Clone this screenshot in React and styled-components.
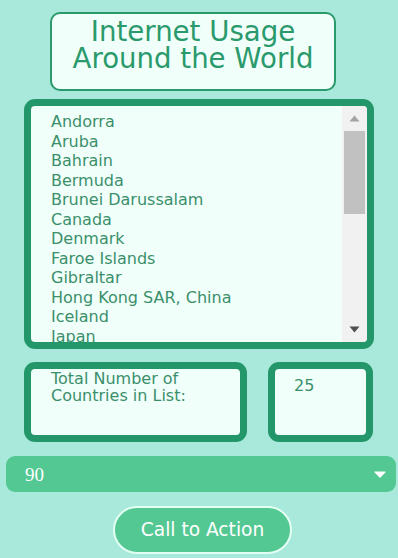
import React, { useLayoutEffect, useRef, useState } from "react";
import styled, { createGlobalStyle } from "styled-components";

const GlobalStyle = createGlobalStyle`
  html, body {
    margin: 0;
    padding: 0;
    background: #a8e9dc;
  }
  body {
    font-family: "DejaVu Sans", Verdana, sans-serif;
  }
`;

const Page = styled.main`
  display: flex;
  flex-direction: column;
  padding: 12px 0 0 0;
  width: 398px;
  box-sizing: border-box;
`;

const TitleBox = styled.h1`
  margin: 0 0 0 50px;
  width: 286px;
  height: 79px;
  box-sizing: border-box;
  border: 2px solid #2a9a6c;
  border-radius: 10px;
  background: #f0fffa;
  color: #2a9a6c;
  font-weight: normal;
  font-size: 27.6px;
  line-height: 27px;
  text-align: center;
  padding-top: 4px;
`;

const Panel = styled.div`
  box-sizing: border-box;
  border: 7px solid #23976a;
  border-radius: 11px;
  background: #f0fffa;
  color: #3b8f6b;
  font-size: 16px;
`;

const ListPanel = styled(Panel)`
  display: flex;
  margin: 8px 24px 0 24px;
  height: 250px;
  overflow: hidden;
`;

const List = styled.ul`
  flex: 1;
  list-style: none;
  margin: 0;
  padding: 6px 0 35px 20px;
  height: 236px;
  box-sizing: border-box;
  overflow-y: auto;
  scrollbar-width: none;
  &::-webkit-scrollbar {
    display: none;
  }
`;

const Item = styled.li`
  line-height: 19.5px;
  white-space: nowrap;
`;

const Rail = styled.div`
  display: flex;
  flex-direction: column;
  width: 25px;
  flex: 0 0 25px;
  background: #f1f1f1;
`;

const RailButton = styled.div`
  display: flex;
  align-items: center;
  justify-content: center;
  height: 25px;
  flex: 0 0 25px;
`;

const Track = styled.div`
  position: relative;
  flex: 1;
`;

const Thumb = styled.div`
  position: absolute;
  left: 2px;
  right: 2px;
  background: #c1c1c1;
`;

const StatsRow = styled.div`
  display: flex;
  gap: 21px;
  margin: 13px 25px 0 24px;
`;

const StatBox = styled(Panel)`
  height: 80px;
  width: ${(p) => p.$w}px;
  padding: ${(p) => p.$pt}px 0 0 ${(p) => p.$pl}px;
  line-height: 17.4px;
`;

const SelectWrap = styled.div`
  position: relative;
  margin: 14px 2px 0 6px;
  height: 36px;
`;

const Select = styled.select`
  appearance: none;
  -webkit-appearance: none;
  width: 100%;
  height: 36px;
  border: none;
  border-radius: 9px;
  background: #53c893;
  color: #ffffff;
  font-family: "Liberation Serif", "Times New Roman", serif;
  font-size: 19px;
  padding: 0 0 0 19px;
  outline: none;
`;

const Arrow = styled.svg`
  position: absolute;
  right: 10px;
  top: 15px;
  pointer-events: none;
`;

const ButtonRow = styled.div`
  display: flex;
  justify-content: flex-start;
  margin: 14px 0 0 113px;
`;

const ActionButton = styled.button`
  width: 179px;
  height: 48px;
  border: 2px solid #e3fff4;
  border-radius: 24px;
  background: #54c893;
  color: #ffffff;
  font-family: "DejaVu Sans", Verdana, sans-serif;
  font-size: 18.6px;
  padding: 0 0 2px 0;
  cursor: pointer;
`;

const countries = [
  "Andorra",
  "Aruba",
  "Bahrain",
  "Bermuda",
  "Brunei Darussalam",
  "Canada",
  "Denmark",
  "Faroe Islands",
  "Gibraltar",
  "Hong Kong SAR, China",
  "Iceland",
  "Japan",
  "Korea, Rep.",
  "Kuwait",
  "Liechtenstein",
  "Luxembourg",
  "Monaco",
  "Netherlands",
  "Norway",
  "Qatar",
  "Saudi Arabia",
  "Sweden",
  "Switzerland",
  "United Arab Emirates",
  "United Kingdom",
];

function CountryList({ items }) {
  const listRef = useRef(null);
  const trackRef = useRef(null);
  const [thumb, setThumb] = useState({ top: 0, height: 83, atTop: true, atBottom: false });

  const update = () => {
    const el = listRef.current;
    const tr = trackRef.current;
    if (!el || !tr) return;
    const trackH = tr.clientHeight;
    const ratio = el.clientHeight / el.scrollHeight;
    const h = Math.max(20, trackH * ratio);
    const maxScroll = el.scrollHeight - el.clientHeight;
    const top = maxScroll > 0 ? (el.scrollTop / maxScroll) * (trackH - h) : 0;
    setThumb({
      top,
      height: h,
      atTop: el.scrollTop <= 0,
      atBottom: el.scrollTop >= maxScroll - 1,
    });
  };

  useLayoutEffect(update, []);

  return (
    <ListPanel>
      <List role="listbox" ref={listRef} onScroll={update}>
        {items.map((c) => (
          <Item key={c} role="option">
            {c}
          </Item>
        ))}
      </List>
      <Rail>
        <RailButton onClick={() => listRef.current && (listRef.current.scrollTop -= 40)}>
          <svg width="11" height="7" viewBox="0 0 11 7">
            <path d="M5.5 0.5 L10.5 6.5 L0.5 6.5 Z" fill={thumb.atTop ? "#a3a3a3" : "#505050"} />
          </svg>
        </RailButton>
        <Track ref={trackRef}>
          <Thumb style={{ top: thumb.top, height: thumb.height }} />
        </Track>
        <RailButton onClick={() => listRef.current && (listRef.current.scrollTop += 40)}>
          <svg width="11" height="7" viewBox="0 0 11 7">
            <path d="M0.5 0.5 L10.5 0.5 L5.5 6.5 Z" fill={thumb.atBottom ? "#a3a3a3" : "#505050"} />
          </svg>
        </RailButton>
      </Rail>
    </ListPanel>
  );
}

export default function App() {
  return (
    <>
      <GlobalStyle />
      <Page>
        <TitleBox>
          Internet Usage
          <br />
          Around the World
        </TitleBox>
        <CountryList items={countries} />
        <StatsRow>
          <StatBox $w={223} $pt={1} $pl={20}>
            Total Number of
            <br />
            Countries in List:
          </StatBox>
          <StatBox $w={105} $pt={8} $pl={19}>
            {countries.length}
          </StatBox>
        </StatsRow>
        <SelectWrap>
          <Select defaultValue="90">
            <option value="50">50</option>
            <option value="60">60</option>
            <option value="70">70</option>
            <option value="80">80</option>
            <option value="90">90</option>
          </Select>
          <Arrow width="12" height="7" viewBox="0 0 12 7">
            <path d="M1 1 L11 1 L6 6 Z" fill="#ffffff" stroke="#ffffff" strokeWidth="1.2" strokeLinejoin="round" />
          </Arrow>
        </SelectWrap>
        <ButtonRow>
          <ActionButton>Call to Action</ActionButton>
        </ButtonRow>
      </Page>
    </>
  );
}
